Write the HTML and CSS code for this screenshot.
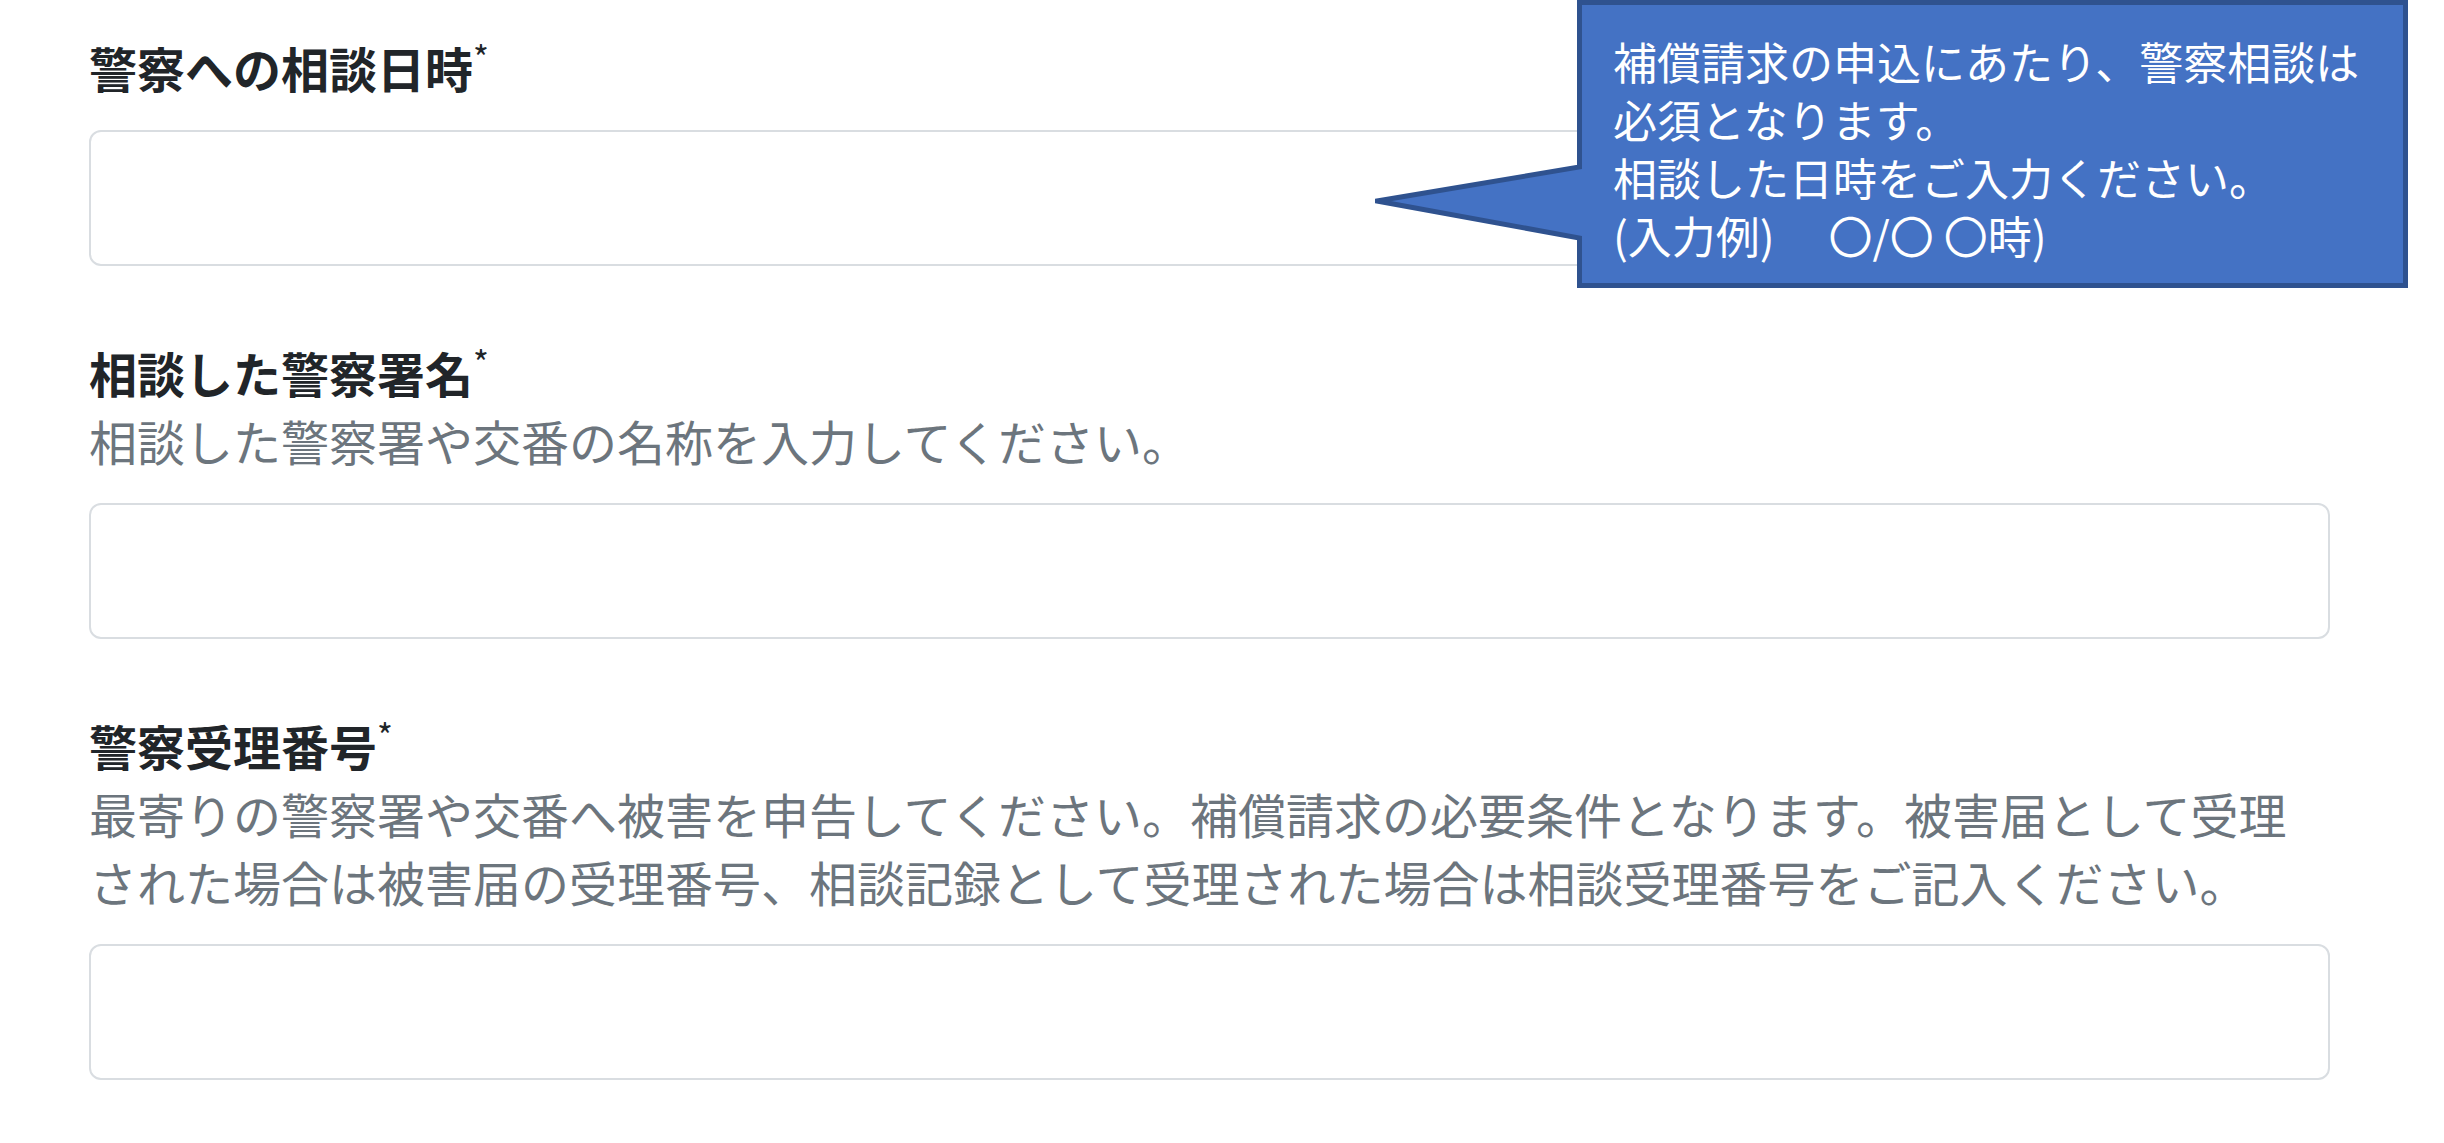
FILE: index.html
```html
<!DOCTYPE html>
<html lang="ja">
<head>
  <meta charset="UTF-8" />
  <meta name="viewport" content="width=device-width, initial-scale=1.0"/>
  <title>警察への相談</title>
  <link rel="stylesheet" href="styles.css">
</head>
<body>
  <form class="form">
    <div class="field">
      <div class="field-head">
        <label class="label" for="consultDate">警察への相談日時<span class="req">*</span></label>
      </div>
      <input class="input" type="text" id="consultDate" />
    </div>

    <div class="field">
      <div class="field-head">
        <label class="label" for="station">相談した警察署名<span class="req">*</span></label>
        <p class="help">相談した警察署や交番の名称を入力してください。</p>
      </div>
      <input class="input" type="text" id="station" />
    </div>

    <div class="field">
      <div class="field-head">
        <label class="label" for="receiptNo">警察受理番号<span class="req">*</span></label>
        <p class="help">最寄りの警察署や交番へ被害を申告してください。補償請求の必要条件となります。被害届として受理された場合は被害届の受理番号、相談記録として受理された場合は相談受理番号をご記入ください。</p>
      </div>
      <input class="input" type="text" id="receiptNo" />
    </div>
  </form>

  <!-- callout over the first field -->
  <div class="callout">
    <svg class="callout-shape" width="1035" height="292" viewBox="0 0 1035 292">
      <path d="M204.5 2.5 H1030.5 V285.5 H204.5 V238 L2 201 L204.5 167 Z" fill="#4472c4" stroke="#2f528f" stroke-width="5" stroke-miterlimit="20"/>
    </svg>
    <p class="callout-text">補償請求の申込にあたり、警察相談は<br>必須となります。<br>相談した日時をご入力ください。<br>(入力例)　&nbsp;〇/〇&nbsp;〇時)</p>
  </div>
</body>
</html>
```

FILE: styles.css
```css
* {
  margin: 0;
  padding: 0;
  box-sizing: border-box;
}
body {
  font-family: "Noto Sans CJK JP", "Noto Sans", sans-serif;
  background: #fff;
  color: #212529;
}
.form {
  display: flex;
  flex-direction: column;
  gap: 72px;
  padding: 33px 114px 0 89px;
}
.field-head {
  margin-bottom: 29px;
}
.label {
  display: block;
  font-size: 48px;
  line-height: 68px;
  font-weight: 700;
  color: #212529;
}
.req {
  font-size: 34px;
  font-weight: 400;
  vertical-align: top;
  line-height: 48px;
}
.help {
  font-size: 48px;
  line-height: 68px;
  color: #6c757d;
}
.input {
  display: block;
  width: 100%;
  height: 136px;
  border: 2px solid #d9dde1;
  border-radius: 12px;
  background: #fff;
  font: inherit;
  font-size: 40px;
  padding: 0 24px;
  outline: none;
}

.callout {
  position: absolute;
  left: 1375px;
  top: 0;
  width: 1035px;
  height: 292px;
}
.callout-shape {
  position: absolute;
  left: 0;
  top: 0;
}
.callout-text {
  position: relative;
  padding: 32px 0 0 238px;
  font-size: 44px;
  line-height: 58px;
  color: #fff;
  white-space: nowrap;
}
```
